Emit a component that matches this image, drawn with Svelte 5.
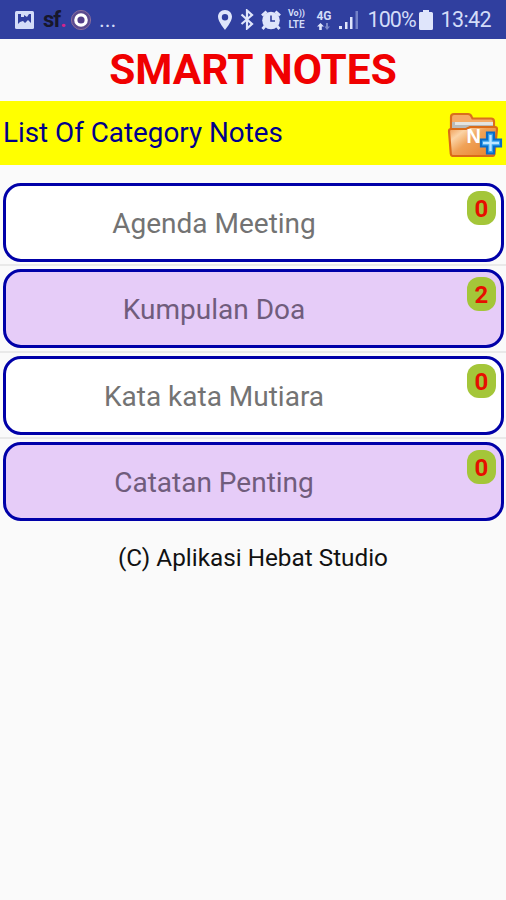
<script lang="ts">
    interface Category {
        name: string;
        count: number;
    }

    let categories: Category[] = [
        { name: 'Agenda Meeting', count: 0 },
        { name: 'Kumpulan Doa', count: 2 },
        { name: 'Kata kata Mutiara', count: 0 },
        { name: 'Catatan Penting', count: 0 }
    ];
</script>

<div class="screen">
    <div class="status-bar">
        <div class="notifications">
            <svg class="picture" width="21" height="20" viewBox="0 0 21 20">
                <rect x="1" y="1" width="19" height="18" rx="1.5" fill="#d3dcf8" />
                <path d="M4 4h3v3h3V5l3 2 2-3h2v9l-3-3-3 3-2-2-3 1-2 2z" fill="#303f9f" />
            </svg>
            <span class="sf">sf<i>.</i></span>
            <svg class="ring" width="22" height="22" viewBox="0 0 22 22">
                <circle cx="11" cy="11" r="9.6" fill="#5b4a8e" stroke="#8a6d9c" stroke-width="1" />
                <circle cx="11" cy="11" r="5.2" fill="#54408a" stroke="#fff" stroke-width="3.2" />
            </svg>
            <span class="more">...</span>
        </div>

        <div class="system">
            <svg class="pin" width="16" height="20" viewBox="0 0 16 20">
                <path d="M8 0C3.8 0 1 3 1 6.8 1 11.8 8 20 8 20s7-8.2 7-13.2C15 3 12.2 0 8 0zm0 4a3.2 3.2 0 1 1 0 6.4A3.2 3.2 0 0 1 8 4z" fill="#dfe5fb" />
            </svg>
            <svg class="bluetooth" width="14" height="21" viewBox="0 0 14 21">
                <path d="M1.5 5.5l10.500 9.500-5 4.500V1.500L12 6 1.500 15" fill="none" stroke="#dfe5fb" stroke-width="2.2" />
            </svg>
            <svg class="alarm" width="20" height="20" viewBox="0 0 20 20">
                <path d="M1 5.5L5.500 1.500M19 5.500L14.500 1.500M4 16l-2.500 3M16 16l2.500 3" stroke="#dfe5fb" stroke-width="2.8" />
                <circle cx="10" cy="10.5" r="8.8" fill="#dfe5fb" />
                <path d="M10 5.500V11h4" fill="none" stroke="#303f9f" stroke-width="1.6" />
            </svg>
            <div class="volte">
                <span class="vo">Vo))</span>
                <span class="lte">LTE</span>
            </div>
            <div class="network">
                <span>4G</span>
                <svg width="13" height="7" viewBox="0 0 13 7">
                    <path d="M3.5 0L0 3.500h2.200V7h2.600V3.500H7z" fill="#dfe5fb" />
                    <path d="M9 0h2v3.500h2L10 7 7.500 3.500H9z" fill="#7d8aca" />
                </svg>
            </div>
            <svg class="signal" width="20" height="19" viewBox="0 0 20 19">
                <path d="M0 16h3v3H0zM6 12h2.500v7H6zM11 7h2.500v12H11z" fill="#dfe5fb" />
                <path d="M16.500 1H19v18h-2.500z" fill="#7482c7" />
            </svg>
            <span class="percent">100%</span>
            <svg class="battery" width="14" height="20" viewBox="0 0 14 20">
                <path d="M4 0h6v2h2.500Q14 2 14 3.500v15q0 1.500-1.500 1.500h-11Q0 20 0 18.500v-15Q0 2 1.500 2H4z" fill="#dfe5fb" />
            </svg>
            <span class="clock">13:42</span>
        </div>
    </div>

    <h1>SMART NOTES</h1>

    <div class="toolbar">
        <h2>List Of Category Notes</h2>
        <button aria-label="Add category">
            <svg width="56" height="48" viewBox="0 0 56 48">
                <defs>
                    <linearGradient id="front" x1="0" y1="0" x2="1" y2="0.8">
                        <stop offset="0" stop-color="#ee9448" />
                        <stop offset="0.25" stop-color="#fbd3a6" />
                        <stop offset="0.5" stop-color="#f0a257" />
                        <stop offset="1" stop-color="#e8852f" />
                    </linearGradient>
                </defs>
                <path d="M4 40V8q0-3 3-3h14q2.500 0 3.500 2.500l1 2H44q3 0 3 3V40z" fill="#f5ab66" stroke="#d96f1e" stroke-width="2.2" />
                <path d="M5 13h41v8H5z" fill="#b9bab8" />
                <path d="M8 13h38v3H8z" fill="#e4e4e0" />
                <path d="M2 22q0-2 2-2h15l4-2h25q2 0 2 2l-2.500 25q-.3 2-2.500 2H6q-2 0-2.200-2z" fill="url(#front)" stroke="#d96b18" stroke-width="2.2" />
                <text x="19.500" y="34">N</text>
                <path d="M40 23.500h7v7h7v7h-7v7h-7v-7h-6v-7h6z" fill="#3aa5ee" stroke="#086bc8" stroke-width="2.2" />
                <path d="M43.500 26v16M36 34h16" stroke="#c0e6ff" stroke-width="2.4" />
            </svg>
        </button>
    </div>

    <ul>
        {#each categories as category, i}
            <li>
                <div class="card" class:tinted={i % 2 === 1}>
                    <span class="name">{category.name}</span>
                    <span class="badge">{category.count}</span>
                </div>
            </li>
        {/each}
    </ul>

    <footer>(C) Aplikasi Hebat Studio</footer>
</div>

<style>
    :global(body) {
        margin: 0;
        background-color: #fafafa;
    }

    .screen {
        height: 900px;
        overflow: hidden;
        background-color: #fafafa;
        font-family: Roboto, 'Liberation Sans', sans-serif;
    }

    .status-bar {
        display: flex;
        justify-content: space-between;
        height: 39px;
        box-sizing: border-box;
        padding: 0 15px 0 14px;
        background-color: #303f9f;
        color: #d3dcf8;
    }

    .notifications,
    .system {
        display: flex;
        align-items: center;
        white-space: nowrap;
    }

    .sf {
        margin-left: 8px;
        color: #17172b;
        font-size: 22px;
        font-weight: 700;
        line-height: 38px;
        width: 20px;
        letter-spacing: -1px;
    }

    .sf i {
        color: #d3248c;
        font-style: normal;
    }

    .ring {
        margin-left: 7px;
    }

    .more {
        margin-left: 7px;
        font-size: 22px;
    }

    .bluetooth {
        margin-left: 7px;
    }

    .alarm {
        margin-left: 7px;
    }

    .volte,
    .network {
        display: flex;
        flex-direction: column;
        align-items: center;
        font-weight: 700;
    }

    .volte {
        width: 20px;
        margin-left: 5px;
    }

    .vo {
        font-size: 9px;
        line-height: 11px;
    }

    .lte {
        font-size: 10px;
        line-height: 12px;
    }

    .network {
        width: 17px;
        margin-left: 9px;
        font-size: 12px;
        line-height: 12px;
        gap: 1px;
    }

    .signal {
        margin-left: 7px;
    }

    .percent {
        width: 47px;
        margin-left: 8px;
        font-size: 21.5px;
        letter-spacing: -0.9px;
    }

    .battery {
        margin-left: 5px;
    }

    .clock {
        margin-left: 7px;
        font-size: 21.5px;
        letter-spacing: -0.6px;
    }

    h1 {
        height: 62px;
        margin: 0;
        color: #f00000;
        font-size: 42.4px;
        font-weight: 700;
        line-height: 62px;
        text-align: center;
    }

    .toolbar {
        display: flex;
        align-items: center;
        justify-content: space-between;
        height: 64px;
        box-sizing: border-box;
        padding: 0 3px;
        background-color: #ffff00;
    }

    h2 {
        margin: -2px 0 0;
        color: #00008b;
        font-size: 27.8px;
        font-weight: 400;
    }

    button {
        display: flex;
        padding: 0;
        border: none;
        background: none;
    }

    button text {
        fill: #fff;
        font-size: 20px;
        font-weight: 700;
    }

    ul {
        margin: 15px 0 0;
        padding: 0;
        list-style: none;
    }

    li {
        height: 86.3px;
        box-sizing: border-box;
        padding: 3px 2px 0 3px;
        border-bottom: 2px solid #e9e9e9;
    }

    li:last-child {
        border-bottom: none;
    }

    .card {
        position: relative;
        display: flex;
        align-items: center;
        justify-content: center;
        height: 79px;
        box-sizing: border-box;
        padding: 2px 79px 0 0;
        border: 3px solid #0000a8;
        border-radius: 18px;
        background-color: #fff;
    }

    .card.tinted {
        background-color: #e6ccf8;
    }

    .name {
        color: #737373;
        font-size: 28px;
    }

    .tinted .name {
        color: #705c7c;
    }

    .badge {
        position: absolute;
        top: 5px;
        right: 5px;
        width: 29px;
        height: 34px;
        border-radius: 12px;
        background-color: #a4c639;
        color: #e60f00;
        font-size: 24px;
        font-weight: 700;
        line-height: 36px;
        text-align: center;
    }

    footer {
        margin-top: 18px;
        color: #111;
        font-size: 24.3px;
        line-height: 30px;
        text-align: center;
    }
</style>
